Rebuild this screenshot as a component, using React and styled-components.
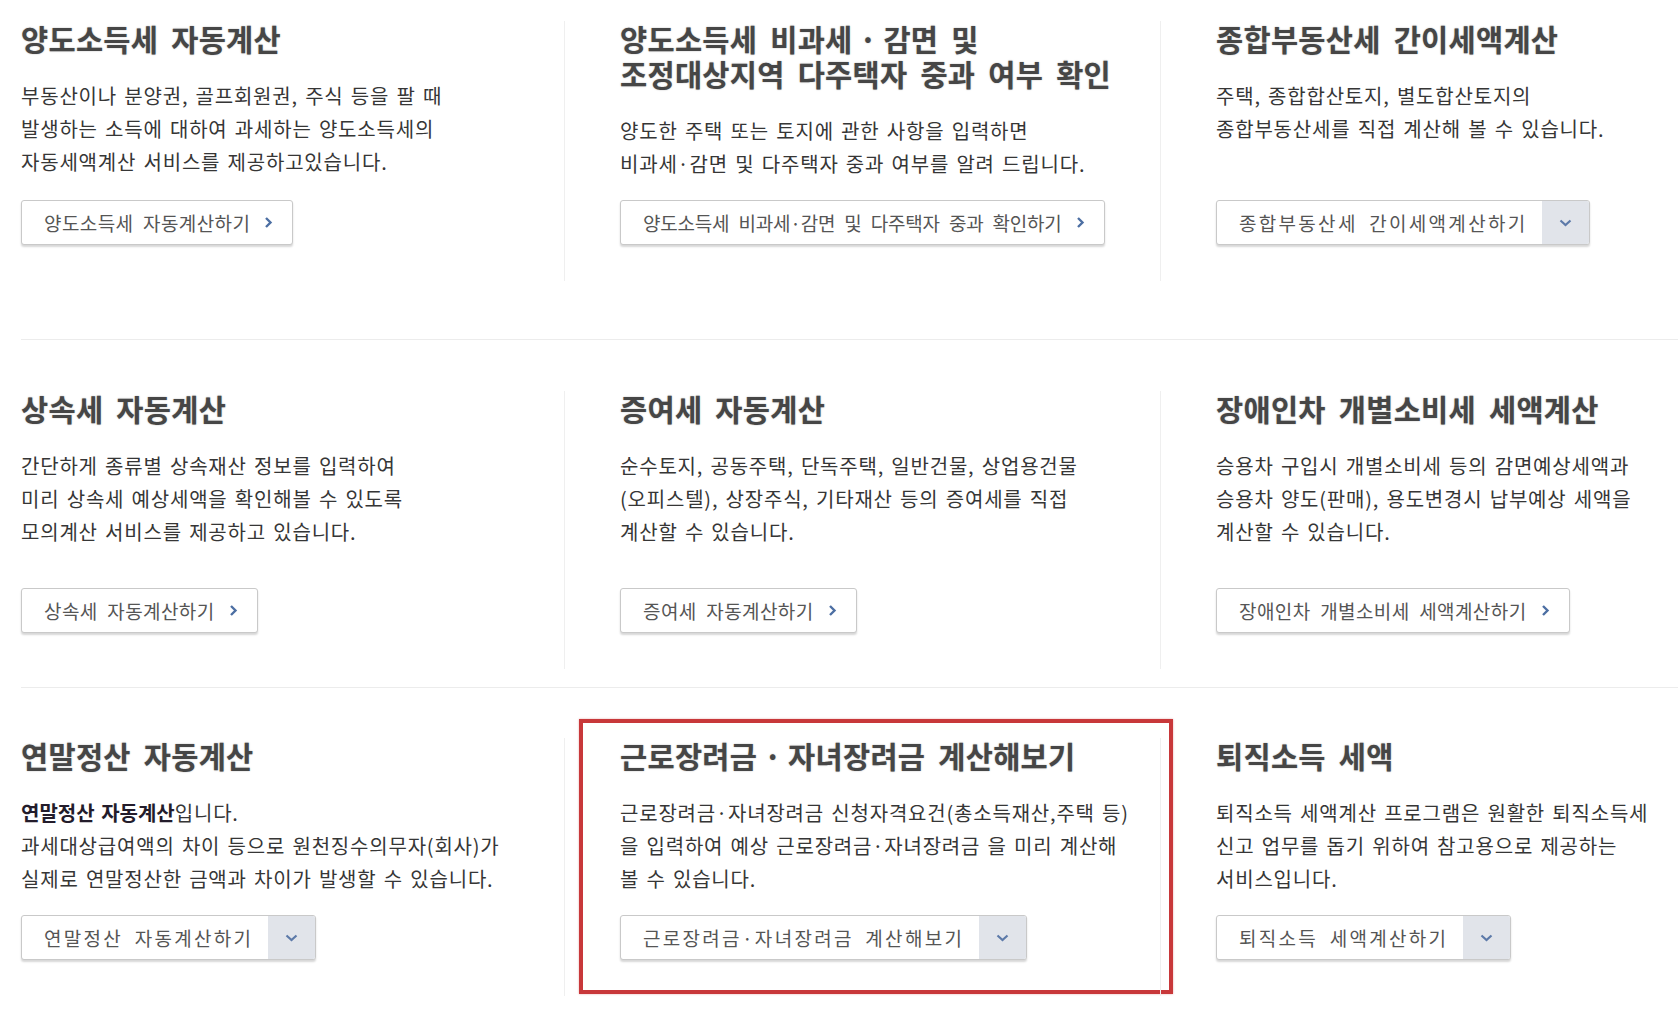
import React from 'react'
import styled, { createGlobalStyle } from 'styled-components'

const GlobalStyle = createGlobalStyle`
  html, body {
    margin: 0;
    padding: 0;
    background: #fff;
    overflow: hidden;
  }
  body {
    font-family: 'Noto Sans CJK KR', 'Noto Sans', sans-serif;
  }
`

const Page = styled.div`
  width: 1678px;
  height: 1014px;
  padding-left: 21px;
  box-sizing: border-box;
`

const Row = styled.div`
  display: grid;
  grid-template-columns: 543px 596px 1fr;
  border-top: ${props => (props.$line ? '1px solid #ececec' : 'none')};
  padding-top: ${props => props.$top}px;
  padding-bottom: ${props => props.$bottom}px;
`

const Cell = styled.div`
  position: relative;
  display: flex;
  flex-direction: column;
  padding-bottom: 36px;
  padding-left: ${props => (props.$first ? '0' : '55px')};
  border-left: ${props => (props.$first ? 'none' : '1px solid #efefef')};
`

const Body = styled.div`
  flex: 1;
`

const Title = styled.h3`
  margin: 0;
  font-size: 29.5px;
  line-height: 35px;
  font-weight: 700;
  color: #464646;
  word-spacing: 6px;
  letter-spacing: 0.3px;
  white-space: nowrap;
  text-shadow: 0 0 1.5px rgba(0, 0, 0, 0.35);
`

const Dot = styled.span`
  word-spacing: 0;
  letter-spacing: 0;
`

const Desc = styled.p`
  margin: 23px 0 0;
  font-size: 20px;
  line-height: 33px;
  color: #363636;
  letter-spacing: 0.8px;
  word-spacing: 2px;
  white-space: nowrap;

  strong {
    font-weight: 700;
    color: #231c2b;
    letter-spacing: 0;
  }
`

const Actions = styled.div`
  margin-top: ${props => props.$gap}px;
`

const Button = styled.a`
  display: inline-flex;
  align-items: stretch;
  height: 45px;
  box-sizing: border-box;
  background: #fff;
  border: 1px solid #c9c9c9;
  border-radius: 3px;
  box-shadow: 0 2px 2px rgba(0, 0, 0, 0.16);
  overflow: hidden;
  color: #555;
  font-size: 19px;
  word-spacing: 5px;
  white-space: nowrap;
  cursor: pointer;
`

const Label = styled.span`
  display: flex;
  align-items: center;
  padding-left: 22px;
  padding-right: ${props => (props.$drop ? '15px' : '14px')};
  letter-spacing: ${props => props.$spacing}px;
`

const Arrow = styled.span`
  display: flex;
  align-items: center;
  padding-right: 19px;
  color: #4d6fa3;
`

const DropPanel = styled.span`
  display: flex;
  align-items: center;
  justify-content: center;
  width: 47px;
  background: #e1e4ea;
  color: #5d7aa9;
`

const Highlight = styled.div`
  position: absolute;
  top: -19px;
  left: 14px;
  right: -13px;
  bottom: 2px;
  border: 4px solid #c8383a;
  box-shadow: 0 0 2px rgba(200, 56, 58, 0.4);
  pointer-events: none;
`

const ChevronRight = () => (
  <svg width="9" height="13" viewBox="0 0 9 13">
    <polyline points="2 2 6.5 6.5 2 11" fill="none" stroke="currentColor" strokeWidth="2.4" />
  </svg>
)

const ChevronDown = () => (
  <svg width="13" height="8" viewBox="0 0 13 8">
    <polyline points="1.5 1.5 6.5 6 11.5 1.5" fill="none" stroke="currentColor" strokeWidth="2.2" />
  </svg>
)

const rows = [
  {
    top: 21,
    bottom: 58,
    gap: 20,
    items: [
      {
        title: ['양도소득세 자동계산'],
        desc: [
          '부동산이나 분양권, 골프회원권, 주식 등을 팔 때',
          '발생하는 소득에 대하여 과세하는 양도소득세의',
          '자동세액계산 서비스를 제공하고있습니다.'
        ],
        button: '양도소득세 자동계산하기'
      },
      {
        title: [
          <React.Fragment key="t">
            양도소득세 비과세<Dot> · </Dot>감면 및
          </React.Fragment>,
          '조정대상지역 다주택자 중과 여부 확인'
        ],
        desc: ['양도한 주택 또는 토지에 관한 사항을 입력하면', '비과세·감면 및 다주택자 중과 여부를 알려 드립니다.'],
        button: '양도소득세 비과세·감면 및 다주택자 중과 확인하기',
        spacing: -0.2
      },
      {
        title: ['종합부동산세 간이세액계산'],
        desc: ['주택, 종합합산토지, 별도합산토지의', '종합부동산세를 직접 계산해 볼 수 있습니다.'],
        button: '종합부동산세 간이세액계산하기',
        drop: true
      }
    ]
  },
  {
    line: true,
    top: 51,
    bottom: 18,
    gap: 40,
    items: [
      {
        title: ['상속세 자동계산'],
        desc: [
          '간단하게 종류별 상속재산 정보를 입력하여',
          '미리 상속세 예상세액을 확인해볼 수 있도록',
          '모의계산 서비스를 제공하고 있습니다.'
        ],
        button: '상속세 자동계산하기'
      },
      {
        title: ['증여세 자동계산'],
        desc: [
          '순수토지, 공동주택, 단독주택, 일반건물, 상업용건물',
          '(오피스텔), 상장주식, 기타재산 등의 증여세를 직접',
          '계산할 수 있습니다.'
        ],
        button: '증여세 자동계산하기'
      },
      {
        title: ['장애인차 개별소비세 세액계산'],
        desc: [
          '승용차 구입시 개별소비세 등의 감면예상세액과',
          '승용차 양도(판매), 용도변경시 납부예상 세액을',
          '계산할 수 있습니다.'
        ],
        button: '장애인차 개별소비세 세액계산하기'
      }
    ]
  },
  {
    line: true,
    top: 50,
    bottom: 0,
    gap: 20,
    items: [
      {
        title: ['연말정산 자동계산'],
        desc: [
          <React.Fragment key="b">
            <strong>연말정산 자동계산</strong>입니다.
          </React.Fragment>,
          '과세대상급여액의 차이 등으로 원천징수의무자(회사)가',
          '실제로 연말정산한 금액과 차이가 발생할 수 있습니다.'
        ],
        button: '연말정산 자동계산하기',
        drop: true
      },
      {
        title: [
          <React.Fragment key="t">
            근로장려금<Dot> · </Dot>자녀장려금 계산해보기
          </React.Fragment>
        ],
        desc: [
          '근로장려금·자녀장려금 신청자격요건(총소득재산,주택 등)',
          '을 입력하여 예상 근로장려금·자녀장려금 을 미리 계산해',
          '볼 수 있습니다.'
        ],
        button: '근로장려금·자녀장려금 계산해보기',
        drop: true,
        highlight: true
      },
      {
        title: ['퇴직소득 세액'],
        desc: [
          '퇴직소득 세액계산 프로그램은 원활한 퇴직소득세',
          '신고 업무를 돕기 위하여 참고용으로 제공하는',
          '서비스입니다.'
        ],
        button: '퇴직소득 세액계산하기',
        drop: true
      }
    ]
  }
]

const withBreaks = lines =>
  lines.map((line, i) => (
    <React.Fragment key={i}>
      {i > 0 && <br />}
      {line}
    </React.Fragment>
  ))

const CalcButton = ({ label, drop, spacing }) => (
  <Button>
    <Label $drop={drop} $spacing={spacing ?? (drop ? 2.3 : 0.4)}>
      {label}
    </Label>
    {drop ? (
      <DropPanel>
        <ChevronDown />
      </DropPanel>
    ) : (
      <Arrow>
        <ChevronRight />
      </Arrow>
    )}
  </Button>
)

const App = () => (
  <>
    <GlobalStyle />
    <Page>
      {rows.map((row, r) => (
        <Row key={r} $line={row.line} $top={row.top} $bottom={row.bottom}>
          {row.items.map((item, i) => (
            <Cell key={i} $first={i === 0}>
              <Body>
                <Title>{withBreaks(item.title)}</Title>
                <Desc>{withBreaks(item.desc)}</Desc>
              </Body>
              <Actions $gap={row.gap}>
                <CalcButton label={item.button} drop={item.drop} spacing={item.spacing} />
              </Actions>
              {item.highlight && <Highlight />}
            </Cell>
          ))}
        </Row>
      ))}
    </Page>
  </>
)

export default App
